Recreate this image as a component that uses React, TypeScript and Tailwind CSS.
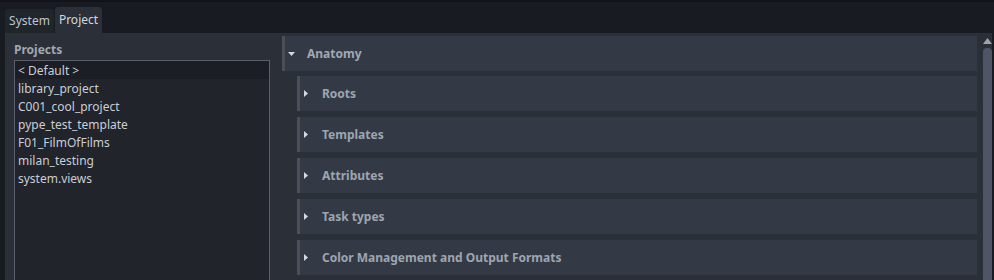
import React from 'react'

const projects = [
  '< Default >',
  'library_project',
  'C001_cool_project',
  'pype_test_template',
  'F01_FilmOfFilms',
  'milan_testing',
  'system.views',
]

const sections = ['Roots', 'Templates', 'Attributes', 'Task types', 'Color Management and Output Formats']

function CaretRight() {
  return (
    <svg width="4" height="7" viewBox="0 0 4 7" className="shrink-0">
      <path d="M0 0 L4 3.5 L0 7 Z" fill="#d3d9e1" />
    </svg>
  )
}

function CaretDown() {
  return (
    <svg width="7" height="4" viewBox="0 0 7 4" className="shrink-0">
      <path d="M0 0 L7 0 L3.5 4 Z" fill="#d3d9e1" />
    </svg>
  )
}

function SectionHeader({ label }: { label: string }) {
  return (
    <div className="flex h-[35px] items-center border-l-[3px] border-[#4b4f57] bg-[#343a45] pl-[4px]">
      <CaretRight />
      <span className="ml-[14px] font-bold text-[#9da5b0]">{label}</span>
    </div>
  )
}

export default function App() {
  return (
    <div
      className="flex h-[280px] w-[994px] flex-col overflow-hidden border-t-2 border-[#111318] bg-[#181b22] text-[12px]"
      style={{ fontFamily: '"Noto Sans", "Open Sans", sans-serif' }}
    >
      {/* tabs */}
      <div className="flex h-[31px] items-end pl-[5px]">
        <div className="flex h-[24px] w-[49px] items-center justify-center rounded-t-[3px] bg-[#20242b] text-[#bfc5cd]">
          System
        </div>
        <div className="ml-px flex h-[26px] w-[47px] items-center justify-center rounded-t-[3px] bg-[#2b2f38] text-[#d3d8df]">
          Project
        </div>
      </div>

      {/* pane */}
      <div className="ml-[5px] mr-[2px] flex flex-1 bg-[#2b2f38]">
        {/* left */}
        <div className="flex w-[265px] flex-col pl-[9px] pt-[8px]">
          <div className="h-[19px] font-bold text-[#a0a7b1]">Projects</div>
          <div className="flex-1 border border-b-0 border-[#5a5f69] bg-[#21242b]">
            {projects.map((p, i) => (
              <div
                key={p}
                className={
                  i === 0
                    ? 'flex h-[18px] items-center bg-[#1b1e24] pl-[3px] pt-px text-[#c9ced5]'
                    : 'flex h-[18px] items-center pl-[3px] pt-px text-[#c9ced5]'
                }
              >
                {p}
              </div>
            ))}
          </div>
        </div>

        {/* right */}
        <div className="flex flex-1 pl-[12px] pt-[3px]">
          <div className="flex flex-1 flex-col">
            <div className="flex h-[35px] items-center border-l-[3px] border-[#4b4f57] bg-[#343a45] pl-[3px]">
              <CaretDown />
              <span className="ml-[12px] font-bold text-[#a0a8b3]">Anatomy</span>
            </div>
            <div className="flex flex-col gap-[6px] pl-[15px] pt-[5px]">
              {sections.map((s) => (
                <SectionHeader key={s} label={s} />
              ))}
            </div>
          </div>
          <div className="ml-[6px] flex w-[9px] flex-col items-center pt-[2px]">
            <svg width="9" height="7" viewBox="0 0 9 7" className="shrink-0">
              <path d="M4.5 0 L9 6 L0 6 Z" fill="#9ea4ae" />
            </svg>
            <div className="mt-[3px] w-[9px] flex-1 rounded-t-[4px] bg-[#4f5567]" />
          </div>
        </div>
      </div>
    </div>
  )
}
